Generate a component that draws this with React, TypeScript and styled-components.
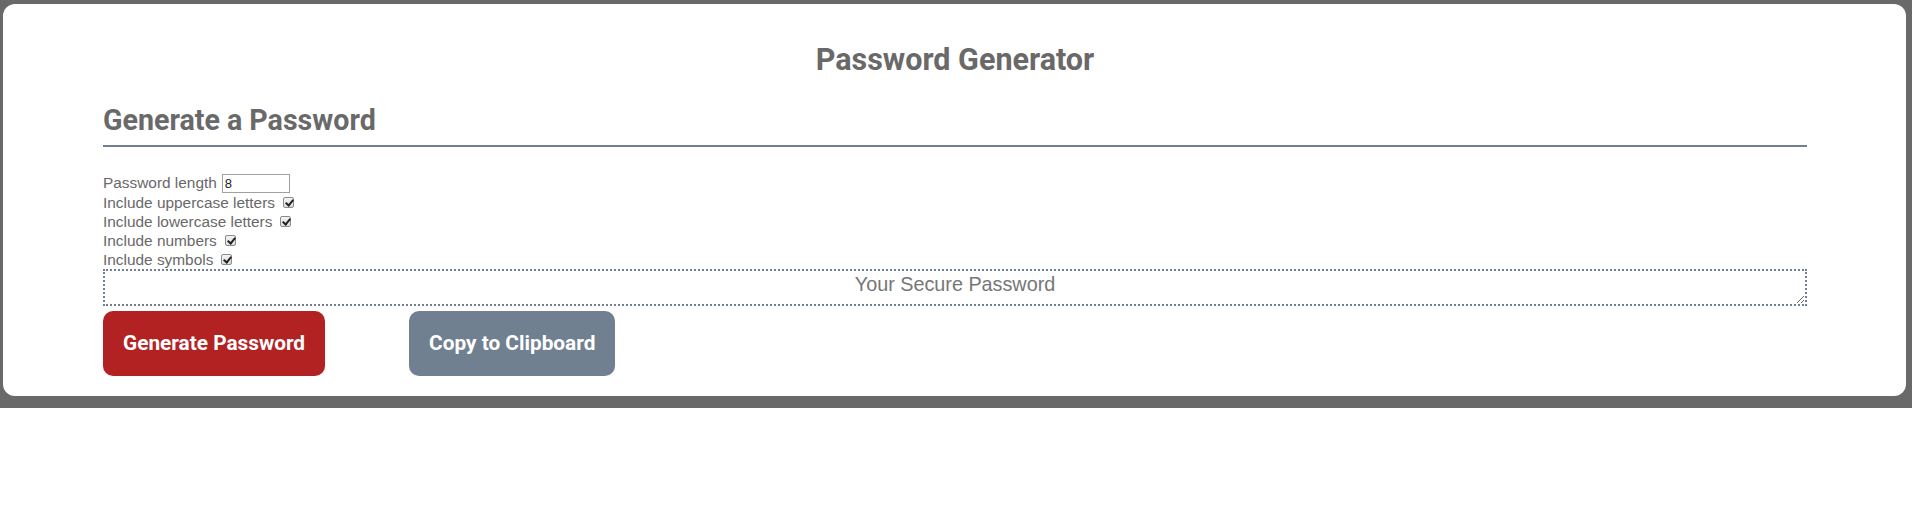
import React, { useState } from "react";
import styled, { createGlobalStyle } from "styled-components";

const GlobalStyle = createGlobalStyle`
  html, body {
    margin: 0;
    padding: 0;
    background: #ffffff;
  }
  body {
    font-family: "Liberation Sans", Arial, sans-serif;
    color: #696969;
  }
`;

const Page = styled.div`
  background-color: #696969;
  padding: 4px 6px 12px 3px;
`;

const Card = styled.div`
  background-color: #ffffff;
  border-radius: 12px;
  padding: 39px 99px 20px 100px;
  display: flex;
  flex-direction: column;
`;

const Title = styled.h1`
  margin: 0;
  font-family: Roboto, "Liberation Sans", sans-serif;
  font-size: 30.5px;
  line-height: 34px;
  font-weight: 700;
  text-align: center;
  color: #696969;
`;

const SectionTitle = styled.h2`
  margin: 27px 0 0;
  padding-bottom: 8px;
  font-family: Roboto, "Liberation Sans", sans-serif;
  font-size: 28.6px;
  line-height: 33px;
  font-weight: 700;
  color: #696969;
  border-bottom: 2px solid #708090;
`;

const Form = styled.div`
  margin-top: 26px;
  display: flex;
  flex-direction: column;
`;

const Row = styled.label<{ $tall?: boolean }>`
  display: flex;
  align-items: center;
  height: ${(p) => (p.$tall ? "20px" : "19px")};
  font-size: 15.4px;
  color: #696969;
`;

const LengthInput = styled.input`
  box-sizing: border-box;
  width: 68px;
  height: 19px;
  margin: 0 0 0 5px;
  padding: 1px 2px;
  border: 1px solid #a0a0a0;
  font-family: "Liberation Sans", Arial, sans-serif;
  font-size: 13px;
  color: #222;
  outline: none;
`;

const Check = styled.input`
  appearance: none;
  box-sizing: border-box;
  position: relative;
  width: 11px;
  height: 11px;
  margin: 0 0 0 8px;
  border: 1px solid #8c8c8c;
  border-radius: 2px;
  background: linear-gradient(#f4f4f4, #dcdcdc);

  &:checked::after {
    content: "";
    position: absolute;
    left: 3px;
    top: 0px;
    width: 3px;
    height: 6px;
    border: solid #222;
    border-width: 0 2px 2px 0;
    transform: rotate(40deg);
  }
`;

const Output = styled.textarea`
  box-sizing: border-box;
  width: 100%;
  height: 37px;
  margin-top: 0;
  padding: 2px 2px 0;
  border: 2px dotted #708090;
  font-family: "Liberation Sans", Arial, sans-serif;
  font-size: 19.8px;
  text-align: center;
  color: #333;
  outline: none;

  &::placeholder {
    color: #767676;
  }
`;

const ButtonRow = styled.div`
  display: flex;
  gap: 84px;
  margin-top: 5px;
`;

const Button = styled.button<{ $bg: string }>`
  padding: 21px 20px;
  line-height: 23px;
  border: none;
  border-radius: 10px;
  background-color: ${(p) => p.$bg};
  color: #ffffff;
  font-family: Roboto, "Liberation Sans", sans-serif;
  font-size: 20.8px;
  font-weight: 700;
  cursor: pointer;
`;

const OPTIONS = [
  "Include uppercase letters",
  "Include lowercase letters",
  "Include numbers",
  "Include symbols",
];

export default function App() {
  const [length, setLength] = useState("8");
  const [checks, setChecks] = useState(OPTIONS.map(() => true));

  return (
    <>
      <GlobalStyle />
      <Page>
        <Card>
          <Title>Password Generator</Title>
          <SectionTitle>Generate a Password</SectionTitle>
          <Form>
            <Row $tall>
              Password length
              <LengthInput
                type="text"
                value={length}
                onChange={(e) => setLength(e.target.value)}
              />
            </Row>
            {OPTIONS.map((opt, i) => (
              <Row key={opt}>
                {opt}
                <Check
                  type="checkbox"
                  checked={checks[i]}
                  onChange={() =>
                    setChecks(checks.map((c, j) => (j === i ? !c : c)))
                  }
                />
              </Row>
            ))}
          </Form>
          <Output placeholder="Your Secure Password" readOnly />
          <ButtonRow>
            <Button $bg="#b22222">Generate Password</Button>
            <Button $bg="#708090">Copy to Clipboard</Button>
          </ButtonRow>
        </Card>
      </Page>
    </>
  );
}
